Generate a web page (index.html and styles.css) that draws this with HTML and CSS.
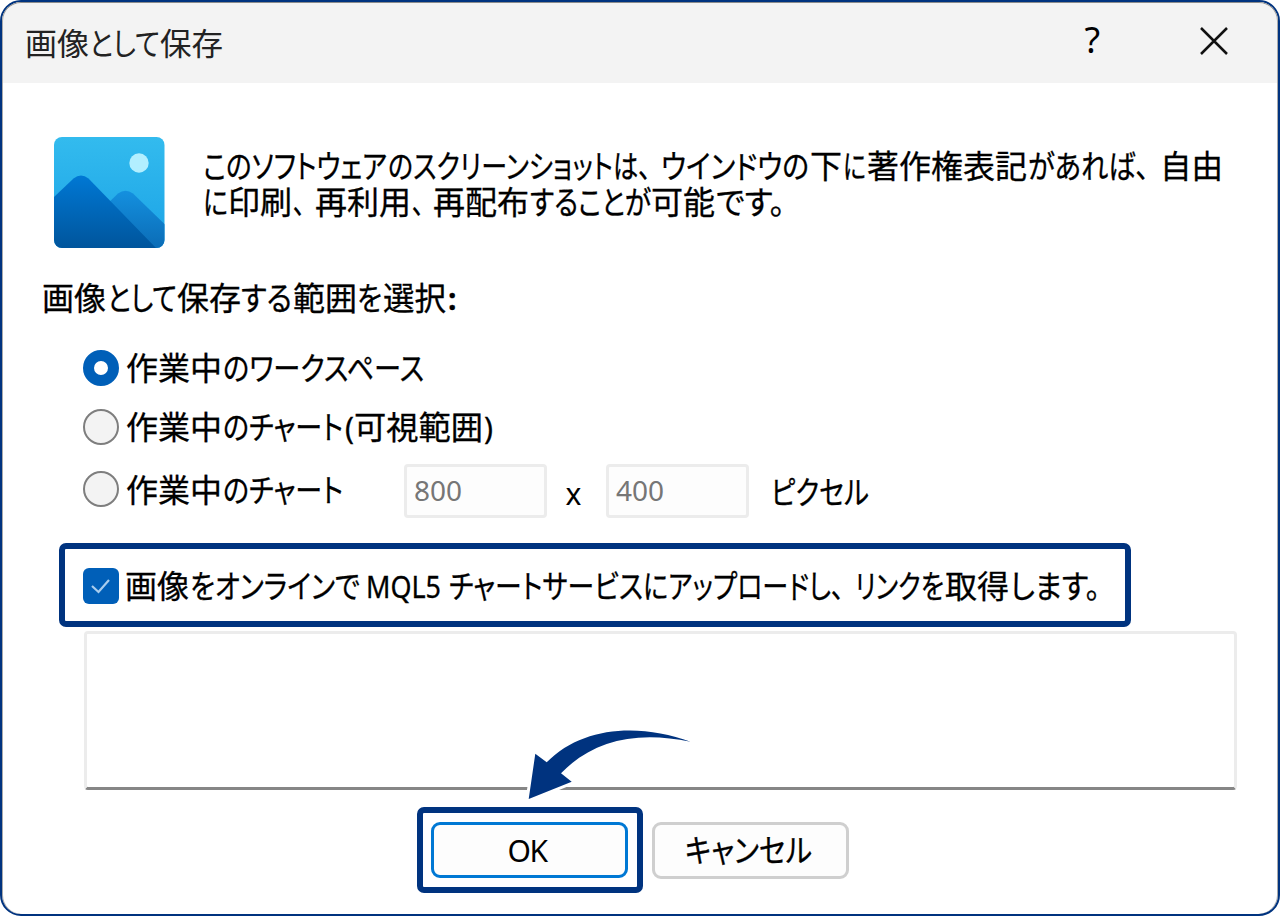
FILE: index.html
```html
<!DOCTYPE html>
<html lang="ja">
<head>
  <meta charset="UTF-8" />
  <meta name="viewport" content="width=device-width, initial-scale=1.0" />
  <title>画像として保存</title>
  <link rel="stylesheet" href="styles.css">
</head>
<body>
  <div class="dialog">
    <header class="titlebar">
      <svg class="line title" width="204" height="44" viewBox="22 0 204 44">
        <text y="34"><tspan x="25" textLength="64" lengthAdjust="spacingAndGlyphs">画像</tspan><tspan x="89" textLength="71" lengthAdjust="spacingAndGlyphs">として</tspan><tspan x="160" textLength="63" lengthAdjust="spacingAndGlyphs">保存</tspan></text>
      </svg>
      <div class="title-buttons">
        <span class="help">?</span>
        <svg class="close" width="28" height="28" viewBox="0 0 28 28"><path d="M1 1l26 26M27 1L1 27" /></svg>
      </div>
    </header>

    <main>
      <div class="intro">
        <svg class="picture" width="111" height="111" viewBox="0 0 111 111">
          <defs>
            <linearGradient id="sky" x1="0" y1="0" x2="0" y2="1"><stop offset="0" stop-color="#33bbee" /><stop offset="1" stop-color="#1ba3e6" /></linearGradient>
            <linearGradient id="front" x1="0" y1="0" x2="0" y2="1"><stop offset="0" stop-color="#0078d4" /><stop offset="1" stop-color="#00559c" /></linearGradient>
            <linearGradient id="back" x1="0" y1="0" x2="0" y2="1"><stop offset="0" stop-color="#1490df" /><stop offset="1" stop-color="#0b6cb6" /></linearGradient>
            <clipPath id="frame"><rect width="110.500" height="111" rx="8" /></clipPath>
          </defs>
          <g clip-path="url(#frame)">
            <rect width="111" height="111" fill="url(#sky)" />
            <circle cx="85" cy="26" r="9.7" fill="#b2efff" />
            <path d="M48 72L64 56.500Q71.500 51 79 56.500L111 87.500V111H60Z" fill="url(#back)" />
            <path d="M0 60L19.500 41.500Q27 35.500 34.500 41.500L102 111H0Z" fill="url(#front)" />
          </g>
        </svg>
        <svg class="line" width="1030" height="90" viewBox="200 0 1030 90">
          <text y="39"><tspan x="203" textLength="184" lengthAdjust="spacingAndGlyphs">このソフトウェア</tspan><tspan x="388" textLength="225" lengthAdjust="spacingAndGlyphs">のスクリーンショット</tspan><tspan x="613" textLength="38" lengthAdjust="spacingAndGlyphs">は、</tspan><tspan x="661" textLength="148" lengthAdjust="spacingAndGlyphs">ウインドウの</tspan><tspan x="810" textLength="32" lengthAdjust="spacingAndGlyphs">下</tspan><tspan x="843" textLength="23" lengthAdjust="spacingAndGlyphs">に</tspan><tspan x="867" textLength="160" lengthAdjust="spacingAndGlyphs">著作権表記</tspan><tspan x="1028" textLength="121" lengthAdjust="spacingAndGlyphs">があれば、</tspan><tspan x="1160" textLength="63" lengthAdjust="spacingAndGlyphs">自由</tspan></text>
          <text y="75"><tspan x="203" textLength="25" lengthAdjust="spacingAndGlyphs">に</tspan><tspan x="228" textLength="64" lengthAdjust="spacingAndGlyphs">印刷</tspan><tspan x="293" textLength="12" lengthAdjust="spacingAndGlyphs">、</tspan><tspan x="315" textLength="96" lengthAdjust="spacingAndGlyphs">再利用</tspan><tspan x="412" textLength="12" lengthAdjust="spacingAndGlyphs">、</tspan><tspan x="433" textLength="96" lengthAdjust="spacingAndGlyphs">再配布</tspan><tspan x="530" textLength="121" lengthAdjust="spacingAndGlyphs">することが</tspan><tspan x="651" textLength="64" lengthAdjust="spacingAndGlyphs">可能</tspan><tspan x="716" textLength="69" lengthAdjust="spacingAndGlyphs">です。</tspan></text>
        </svg>
      </div>

      <svg class="line heading" width="420" height="44" viewBox="40 0 420 44">
        <text y="34"><tspan x="42" textLength="64" lengthAdjust="spacingAndGlyphs">画像</tspan><tspan x="107" textLength="70" lengthAdjust="spacingAndGlyphs">として</tspan><tspan x="177" textLength="64" lengthAdjust="spacingAndGlyphs">保存</tspan><tspan x="241" textLength="51" lengthAdjust="spacingAndGlyphs">する</tspan><tspan x="293" textLength="64" lengthAdjust="spacingAndGlyphs">範囲</tspan><tspan x="357" textLength="25" lengthAdjust="spacingAndGlyphs">を</tspan><tspan x="383" textLength="63" lengthAdjust="spacingAndGlyphs">選択</tspan><tspan class="latin bold" x="448">:</tspan></text>
      </svg>

      <div class="options">
        <div class="option">
          <span class="radio checked"></span>
          <svg class="line" width="320" height="44" viewBox="124 0 320 44">
            <text y="34"><tspan x="126" textLength="96" lengthAdjust="spacingAndGlyphs">作業中</tspan><tspan x="223" textLength="201" lengthAdjust="spacingAndGlyphs">のワークスペース</tspan></text>
          </svg>
        </div>
        <div class="option">
          <span class="radio"></span>
          <svg class="line" width="380" height="44" viewBox="124 0 380 44">
            <text y="34"><tspan x="126" textLength="96" lengthAdjust="spacingAndGlyphs">作業中</tspan><tspan x="223" textLength="120" lengthAdjust="spacingAndGlyphs">のチャート</tspan><tspan class="latin" x="345">(</tspan><tspan x="354" textLength="129" lengthAdjust="spacingAndGlyphs">可視範囲</tspan><tspan class="latin" x="484">)</tspan></text>
          </svg>
        </div>
        <div class="option size">
          <span class="radio"></span>
          <svg class="line" width="280" height="44" viewBox="124 0 280 44">
            <text y="32.500"><tspan x="126" textLength="96" lengthAdjust="spacingAndGlyphs">作業中</tspan><tspan x="223" textLength="120" lengthAdjust="spacingAndGlyphs">のチャート</tspan></text>
          </svg>
          <div class="number">800</div>
          <span class="times">x</span>
          <div class="number">400</div>
          <svg class="line unit" width="104" height="44" viewBox="770 0 104 44">
            <text y="35"><tspan x="771" textLength="98" lengthAdjust="spacingAndGlyphs">ピクセル</tspan></text>
          </svg>
        </div>
      </div>

      <div class="highlight upload">
        <svg class="checkbox" width="36" height="36" viewBox="0 0 36 36">
          <rect width="36" height="36" rx="6" />
          <path d="M9 18L15.500 24L26 12" />
        </svg>
        <svg class="line" width="990" height="44" viewBox="124 0 990 44">
          <text y="34"><tspan x="125" textLength="64" lengthAdjust="spacingAndGlyphs">画像</tspan><tspan x="190" textLength="170" lengthAdjust="spacingAndGlyphs">をオンラインで</tspan><tspan class="latin" x="366" textLength="75" lengthAdjust="spacingAndGlyphs">MQL5</tspan><tspan x="449" textLength="194" lengthAdjust="spacingAndGlyphs">チャートサービス</tspan><tspan x="643" textLength="201" lengthAdjust="spacingAndGlyphs">にアップロードし、</tspan><tspan x="855" textLength="89" lengthAdjust="spacingAndGlyphs">リンクを</tspan><tspan x="945" textLength="64" lengthAdjust="spacingAndGlyphs">取得</tspan><tspan x="1010" textLength="90" lengthAdjust="spacingAndGlyphs">します。</tspan></text>
        </svg>
      </div>

      <div class="output">
        <svg class="arrow" width="190" height="90" viewBox="514 718 190 90">
          <path d="M528.700 799L535.300 753.700L546.700 762.300C582 726 640 723 690.700 741.700C635 730 592 741 561 773.300L571.700 781.700Z" />
        </svg>
      </div>

      <div class="actions">
        <div class="highlight"><div class="button primary">OK</div></div>
        <div class="button">
          <svg class="line" width="130" height="44" viewBox="687 0 130 44">
            <text y="34"><tspan x="686" textLength="127" lengthAdjust="spacingAndGlyphs">キャンセル</tspan></text>
          </svg>
        </div>
      </div>
    </main>
  </div>
</body>
</html>
```
FILE: styles.css
```css
* {
  box-sizing: border-box;
}

body {
  margin: 0;
  background: #fff;
  color: #000;
  font-family: "Noto Sans", "Noto Sans CJK JP", sans-serif;
}

.dialog {
  width: 1280px;
  height: 916px;
  border: 2px solid #00337f;
  border-radius: 21px;
  background: #fff;
  box-shadow: inset 1px 0 0 #aaa, inset -1px 0 0 #aaa;
  overflow: hidden;
}

.titlebar {
  display: flex;
  justify-content: space-between;
  align-items: center;
  height: 81px;
  padding: 0 50px 0 20px;
  border-radius: 19px 19px 0 0;
  background: #f3f3f3;
  box-shadow: inset 0 1px 0 #8c8c8c, inset 1px 0 0 #aaa, inset -1px 0 0 #aaa;
}

.title-buttons {
  display: flex;
  align-items: center;
  gap: 100px;
  padding-bottom: 4px;
}

.help {
  font-size: 36px;
  line-height: 38px;
  padding-bottom: 2px;
}

.close {
  fill: none;
  stroke: #111;
  stroke-width: 2.5;
}

/* text lines with proportional kana */
.line {
  display: block;
  flex: none;
  overflow: visible;
  font-family: "Noto Sans CJK JP", sans-serif;
  font-size: 32px;
}

.line text {
  fill: #000;
  stroke: #000;
  stroke-width: 0.3;
  font-feature-settings: "palt";
}

.title {
  font-size: 31px;
}

.title text {
  fill: #222;
  stroke: none;
}

.latin {
  font-family: "Noto Sans", sans-serif;
  font-size: 30px;
}

.bold {
  font-weight: 700;
}

main {
  padding: 54px 40px 0 38px;
}

.intro {
  display: flex;
  gap: 35px;
  height: 112px;
  padding-left: 14px;
}

.intro .line {
  margin-top: 2px;
}

.picture {
  flex: none;
}

.heading {
  margin-top: 27px;
}

.options {
  padding: 26px 0 0 43px;
}

.option {
  display: flex;
  align-items: center;
  gap: 5px;
  height: 44px;
  margin-bottom: 15px;
}

.size {
  height: 54px;
  gap: 0;
  margin: 0;
}

.size .radio {
  margin: 0 5px 4px 0;
}

.radio {
  flex: none;
  width: 36px;
  height: 36px;
  border: 2px solid #7e7e7e;
  border-radius: 50%;
  background: #f3f3f3;
}

.checked {
  border: 11px solid #005fb8;
  background: #fff;
}

.number {
  width: 143px;
  height: 54px;
  padding-left: 7px;
  border: 3px solid #ececec;
  border-radius: 4px;
  background: #fdfdfd;
  color: #767676;
  font-size: 28px;
  line-height: 46px;
}

.times {
  width: 59px;
  padding: 6px 6px 0 0;
  font-size: 30px;
  line-height: 40px;
  text-align: center;
}

.unit {
  margin-left: 21px;
}

.highlight {
  border: 6px solid #00337f;
  border-radius: 7px;
}

.upload {
  display: flex;
  align-items: center;
  gap: 5px;
  width: 1072px;
  height: 84px;
  margin: 25px 0 0 19px;
  padding: 2px 0 0 18px;
}

.checkbox rect {
  fill: #005fb8;
}

.checkbox path {
  fill: none;
  stroke: #a9cdee;
  stroke-width: 2.2;
}

.output {
  position: relative;
  width: 1153px;
  height: 159px;
  margin: 4px 0 0 44px;
  border: 3px solid #ececec;
  border-bottom-color: #868686;
  border-radius: 4px;
  background: #fff;
}

.arrow {
  position: absolute;
  left: 427px;
  top: 84px;
}

.arrow path {
  fill: #00337f;
  stroke: #fff;
  stroke-width: 6;
  paint-order: stroke;
}

.actions {
  display: flex;
  align-items: center;
  gap: 9px;
  margin: 17px 0 0 377px;
}

.actions .highlight {
  width: 226px;
  height: 86px;
  padding: 9px 8px;
}

.button {
  display: flex;
  justify-content: center;
  align-items: center;
  width: 197px;
  height: 57px;
  border: 3px solid #cfcfcf;
  border-radius: 9px;
  background: #fdfdfd;
  font-size: 30px;
  letter-spacing: -1.5px;
}

.button .line {
  letter-spacing: 0;
}

.primary {
  width: 197px;
  height: 56px;
  padding: 1px 5px 0 0;
  border-color: #0078d4;
}
```
